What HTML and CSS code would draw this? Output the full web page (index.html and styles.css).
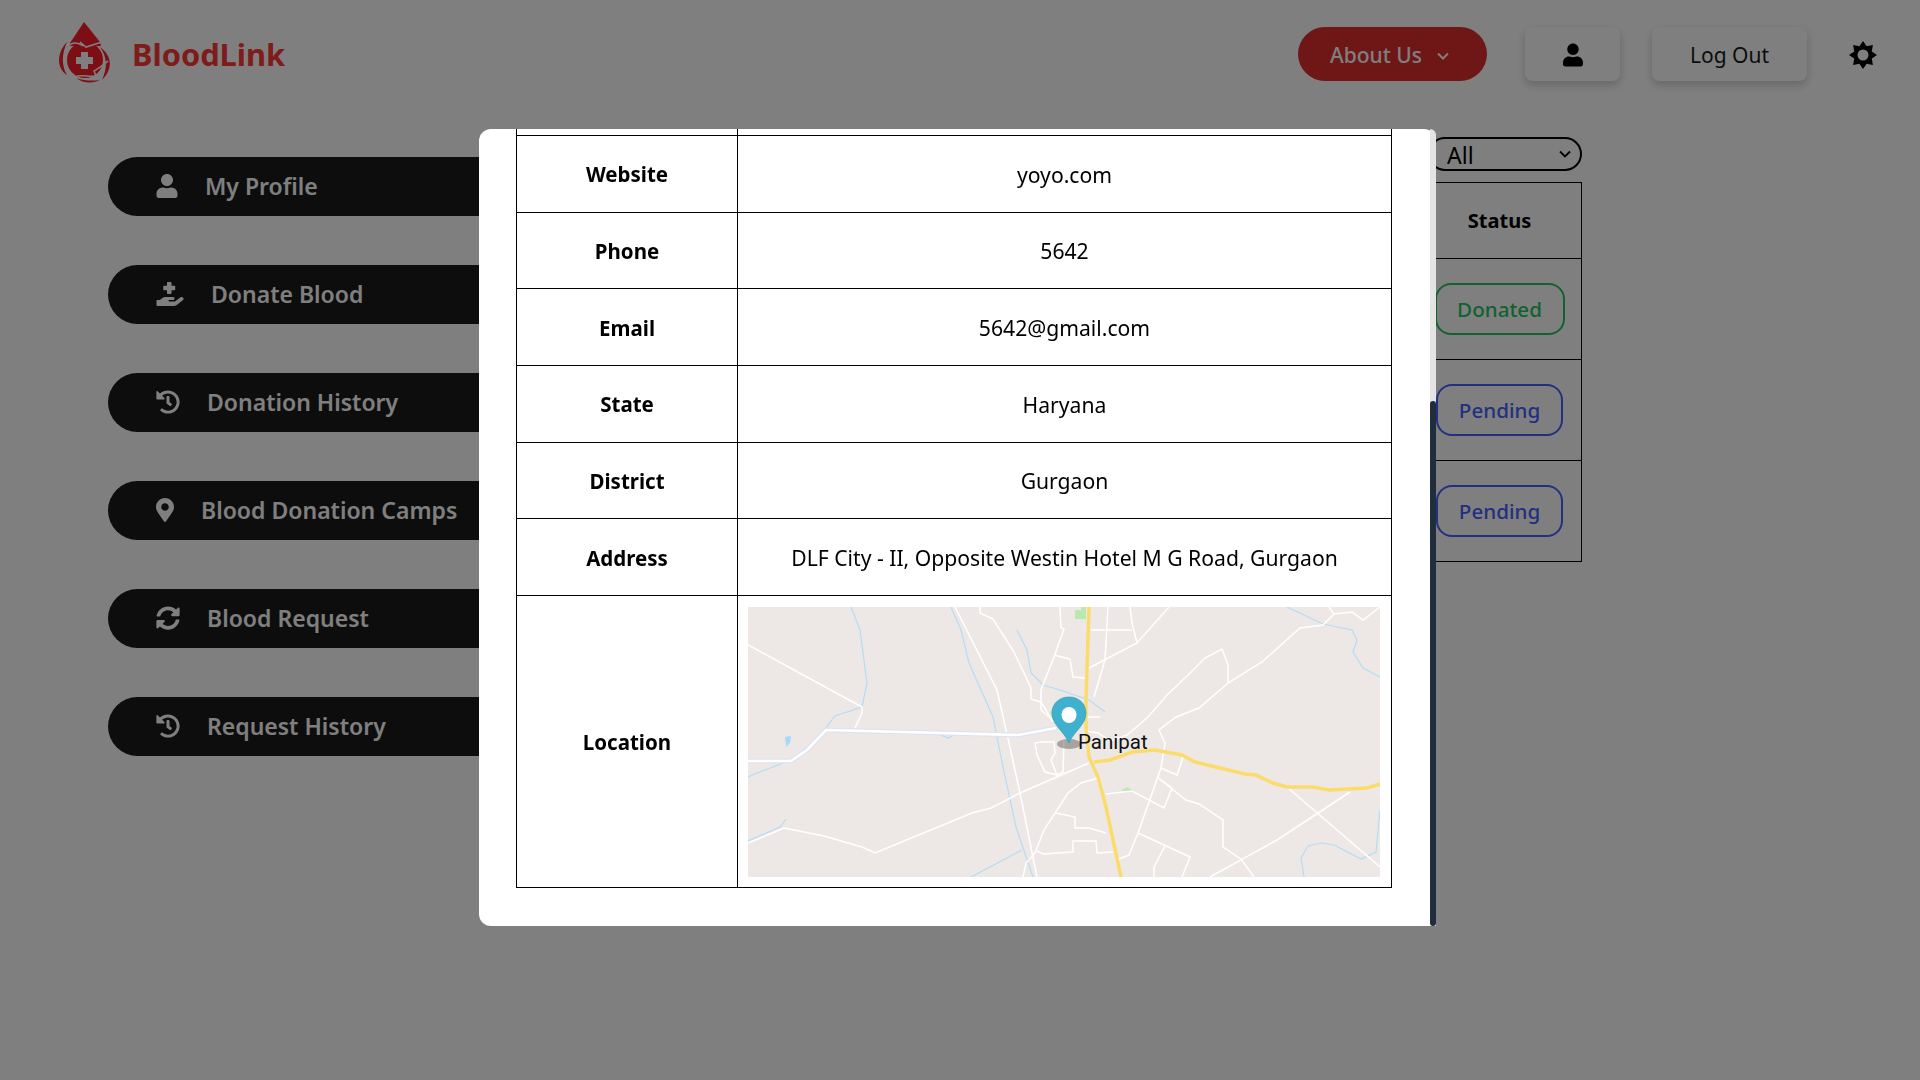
FILE: index.html
```html
<!DOCTYPE html>
<html lang="en">
  <head>
    <meta charset="UTF-8" />
    <meta name="viewport" content="width=device-width, initial-scale=1.0" />
    <title>BloodLink</title>
    <link rel="stylesheet" href="styles.css">
  </head>
  <body>
    <header class="navbar">
      <div class="brand">
        <svg class="brand-logo" viewBox="0 0 70 75">
          <path class="logo-red" d="M34 7 L50 27 L51 31 L20 31 L20 28 Z" />
          <circle class="logo-red" cx="35" cy="45" r="18" />
          <path class="logo-red" d="M17 27 C8 36 5 52 17 60 C11 50 12 38 17 27 Z" />
          <path class="logo-red" d="M50 32 C60 39 65 52 52 65 C58 52 57 42 50 32 Z" />
          <path class="logo-red" d="M26 63 C34 69 44 68 50 65 C43 66 34 66 26 63 Z" />
          <path class="logo-cut" d="M17 32 C22 27 28 27 33 31 M30 27 L36 32 L52 27" />
          <path class="logo-cut" d="M58 46 C50 52 48 54 44 56 L46 61 C40 62 34 60 27 61" />
          <path class="logo-cross" d="M31 37 h7 v5 h5 v7 h-5 v5 h-7 v-5 h-5 v-7 h5 z" />
        </svg>
        <span class="brand-name">BloodLink</span>
      </div>
      <nav class="nav-actions">
        <button class="about-btn">
          About Us
          <svg class="chevron" viewBox="0 0 12 8"><path d="M1 1.5 L6 6.5 L11 1.5" /></svg>
        </button>
        <button class="plain-btn user-btn">
          <svg class="user-icon" viewBox="0 0 448 512"><path d="M224 256c70.7 0 128-57.3 128-128S294.7 0 224 0 96 57.3 96 128s57.3 128 128 128zm89.6 32h-16.7c-22.2 10.2-46.9 16-72.9 16s-50.6-5.8-72.9-16h-16.7C60.2 288 0 348.2 0 422.4V464c0 26.5 21.5 48 48 48h352c26.5 0 48-21.5 48-48v-41.6c0-74.2-60.2-134.4-134.4-134.4z" /></svg>
        </button>
        <button class="plain-btn logout-btn">Log Out</button>
        <svg class="sun-icon" viewBox="0 0 28 28">
          <path d="M14 0 L17.6 5.2 L23.9 4.1 L22.8 10.4 L28 14 L22.8 17.6 L23.9 23.9 L17.6 22.8 L14 28 L10.4 22.8 L4.1 23.9 L5.2 17.6 L0 14 L5.2 10.4 L4.1 4.1 L10.4 5.2 Z" />
          <circle class="sun-hole" cx="14" cy="14" r="5.5" />
        </svg>
      </nav>
    </header>

    <div class="layout">
      <aside class="sidebar">
        <a class="side-link">
          <svg class="side-icon icon-user" viewBox="0 0 448 512"><path d="M224 256c70.7 0 128-57.3 128-128S294.7 0 224 0 96 57.3 96 128s57.3 128 128 128zm89.6 32h-16.7c-22.2 10.2-46.9 16-72.9 16s-50.6-5.8-72.9-16h-16.7C60.2 288 0 348.2 0 422.4V464c0 26.5 21.5 48 48 48h352c26.5 0 48-21.5 48-48v-41.6c0-74.2-60.2-134.4-134.4-134.4z" /></svg>
          My Profile
        </a>
        <a class="side-link">
          <svg class="side-icon icon-hand" viewBox="0 0 576 512"><path d="M159.88 175.82h64v64a16 16 0 0 0 16 16h64a16 16 0 0 0 16-16v-64h64a16 16 0 0 0 16-16v-64a16 16 0 0 0-16-16h-64v-64a16 16 0 0 0-16-16h-64a16 16 0 0 0-16 16v64h-64a16 16 0 0 0-16 16v64a16 16 0 0 0 16 16zM568.07 336.13a39.91 39.91 0 0 0-55.93-8.47L392.47 415.84H271.86a16 16 0 0 1 0-32H350.1c16 0 30.75-10.87 33.37-26.61a32.06 32.06 0 0 0-31.62-37.39h-160a117.7 117.7 0 0 0-74.12 26.25l-46.5 37.74H16a16 16 0 0 0-16 16v96a16 16 0 0 0 16 16H362.89a119.82 119.82 0 0 0 70.11-22.6L560.14 390.63a40 40 0 0 0 7.93-54.5z" /></svg>
          Donate Blood
        </a>
        <a class="side-link">
          <svg class="side-icon icon-round" viewBox="0 0 512 512"><path d="M504 255.531c.253 136.64-111.18 248.372-247.82 248.468-59.015.042-113.223-20.53-155.822-54.911-11.077-8.94-11.905-25.541-1.839-35.607l11.267-11.267c8.609-8.609 22.353-9.551 31.891-1.984C173.062 425.135 212.781 440 256 440c101.705 0 184-82.311 184-184 0-101.705-82.311-184-184-184-48.814 0-93.149 18.969-126.068 49.932l50.754 50.754c10.08 10.08 2.941 27.314-11.313 27.314H24c-8.837 0-16-7.163-16-16V38.627c0-14.254 17.234-21.393 27.314-11.314l49.372 49.372C129.209 34.136 189.552 8 256 8c136.81 0 247.747 110.78 248 247.531zm-180.912 78.784l9.823-12.63c8.138-10.463 6.253-25.542-4.21-33.679L288 256.349V152c0-13.255-10.745-24-24-24h-16c-13.255 0-24 10.745-24 24v135.651l65.409 50.874c10.463 8.137 25.541 6.253 33.679-4.21z" /></svg>
          Donation History
        </a>
        <a class="side-link">
          <svg class="side-icon icon-pin" viewBox="0 0 384 512"><path d="M172.268 501.67C26.97 291.031 0 260.868 0 192 0 85.961 85.961 0 192 0s192 85.961 192 192c0 68.868-26.97 99.031-172.268 309.67-9.535 13.774-29.93 13.773-39.464 0zM192 272c44.183 0 80-35.817 80-80s-35.817-80-80-80-80 35.817-80 80 35.817 80 80 80z" /></svg>
          Blood Donation Camps
        </a>
        <a class="side-link">
          <svg class="side-icon icon-round" viewBox="0 0 512 512"><path d="M370.72 133.28C339.458 104.008 298.888 87.962 255.848 88c-77.458.068-144.328 53.178-162.791 126.85-1.344 5.363-6.122 9.15-11.651 9.15H24.103c-7.498 0-13.194-6.807-11.807-14.176C33.933 94.924 134.813 8 256 8c66.448 0 126.791 26.136 171.315 68.685L463.03 40.97C478.149 25.851 504 36.559 504 57.941V192c0 13.255-10.745 24-24 24H345.941c-21.382 0-32.09-25.851-16.971-40.971l41.75-41.749zM32 296h134.059c21.382 0 32.09 25.851 16.971 40.971l-41.75 41.75c31.262 29.273 71.835 45.319 114.876 45.28 77.418-.07 144.315-53.144 162.787-126.849 1.344-5.363 6.122-9.15 11.651-9.15h57.304c7.498 0 13.194 6.807 11.807 14.176C478.067 417.076 377.187 504 256 504c-66.448 0-126.791-26.136-171.315-68.685L48.97 471.03C33.851 486.149 8 475.441 8 454.059V320c0-13.255 10.745-24 24-24z" /></svg>
          Blood Request
        </a>
        <a class="side-link">
          <svg class="side-icon icon-round" viewBox="0 0 512 512"><path d="M504 255.531c.253 136.64-111.18 248.372-247.82 248.468-59.015.042-113.223-20.53-155.822-54.911-11.077-8.94-11.905-25.541-1.839-35.607l11.267-11.267c8.609-8.609 22.353-9.551 31.891-1.984C173.062 425.135 212.781 440 256 440c101.705 0 184-82.311 184-184 0-101.705-82.311-184-184-184-48.814 0-93.149 18.969-126.068 49.932l50.754 50.754c10.08 10.08 2.941 27.314-11.313 27.314H24c-8.837 0-16-7.163-16-16V38.627c0-14.254 17.234-21.393 27.314-11.314l49.372 49.372C129.209 34.136 189.552 8 256 8c136.81 0 247.747 110.78 248 247.531zm-180.912 78.784l9.823-12.63c8.138-10.463 6.253-25.542-4.21-33.679L288 256.349V152c0-13.255-10.745-24-24-24h-16c-13.255 0-24 10.745-24 24v135.651l65.409 50.874c10.463 8.137 25.541 6.253 33.679-4.21z" /></svg>
          Request History
        </a>
      </aside>

      <main class="content">
        <div class="filter-row">
          <div class="filter-wrap">
            <select class="filter">
              <option>All</option>
            </select>
            <svg class="filter-arrow" viewBox="0 0 12 8"><path d="M1 1.5 L6 6.5 L11 1.5" /></svg>
          </div>
        </div>
        <table class="history-table">
          <tr>
            <th></th>
            <th class="status-col">Status</th>
          </tr>
          <tr>
            <td></td>
            <td class="status-cell"><span class="badge badge-green">Donated</span></td>
          </tr>
          <tr>
            <td></td>
            <td class="status-cell"><span class="badge badge-blue">Pending</span></td>
          </tr>
          <tr>
            <td></td>
            <td class="status-cell"><span class="badge badge-blue">Pending</span></td>
          </tr>
        </table>
      </main>
    </div>

    <!---------Details popup, opened scrolled to its end----------->
    <div class="overlay"></div>
    <div class="modal">
      <div class="modal-scroll">
        <div class="modal-body">
          <table class="detail-table">
            <tr><th></th><td></td></tr>
            <tr><th>Website</th><td>yoyo.com</td></tr>
            <tr><th>Phone</th><td>5642</td></tr>
            <tr><th>Email</th><td>5642@gmail.com</td></tr>
            <tr><th>State</th><td>Haryana</td></tr>
            <tr><th>District</th><td>Gurgaon</td></tr>
            <tr><th>Address</th><td>DLF City - II, Opposite Westin Hotel M G Road, Gurgaon</td></tr>
            <tr class="map-row">
              <th>Location</th>
              <td>
                <svg class="map" viewBox="0 0 632 270">
                  <rect class="map-land" width="632" height="270" />
                  <path class="map-green" d="M327 12 V3 H333 V0 H338 V12 Z" />
                  <path class="map-green" d="M373 184 L379 180 L386 184 Z" />
                  <path class="map-green" d="M302 105 L306 100 L306 118 Z" />
                  <path class="map-lake" d="M37 130 L43 129 L42 136 L38 140 Z" />

                  <g class="map-river">
                    <path d="M103 0 L112 23 L119 76 L114 100 L87 109 L68 133 L43 153 L9 166 L0 170" />
                    <path d="M203 0 L213 23 L221 56 L245 110 L255 160 L268 220 L285 270" />
                    <path d="M269 23 L279 43 L283 66 L295 78 L312 83 L341 93 L357 105" />
                    <path d="M0 234 L32 220 L38 212" />
                    <path d="M223 270 L274 243" />
                    <path d="M556 270 L553 251 L560 239 L573 236 L586 238 L613 252 L628 245 L632 203" />
                    <path d="M539 0 L575 17 L604 23 L609 33 L605 45 L615 61 L632 70" />
                    <path d="M190 127 L200 131 L208 127" />
                  </g>

                  <g class="map-road">
                    <path d="M0 38 L114 100 L114 106 L106 123" />
                    <path d="M207 0 L249 83 L261 136 L272 186 L289 270" />
                    <path d="M421 0 L389 36 L341 61" />
                    <path d="M632 0 L615 13 L604 5 L586 7 L581 0 M586 7 L575 18 L552 21 L514 55 L480 76 L451 101 L428 110 L411 123 L417 136 L413 161 L390 226 L381 248 L371 252" />
                    <path d="M480 76 L480 58 L474 42 L457 51 L440 68 L419 88 L400 110 L379 128" />
                    <path d="M360 0 L357 53 L346 90" />
                    <path d="M382 0 L384 16 L389 36" />
                    <path d="M343 23 L384 23" />
                    <path d="M312 0 L313 21 L316 22 L306 50 L293 83 L293 103 L308 116" />
                    <path d="M306 48 L322 52 L325 70 L337 71" />
                    <path d="M232 0 L232 6 L245 12 L266 45 L283 81 L283 92 L293 95 L305 115" />
                    <path d="M287 136 L289 148 L297 165 L309 168 L303 153 L307 146 L306 135 L293 135 Z" />
                    <path d="M316 133 L315 165 L309 168" />
                    <path d="M338 110 L352 110 M338 124 L350 126 L362 134 L379 128" />
                    <path d="M0 236 L36 221 L76 229 L114 240 L127 246 L224 206 L243 201 L272 186 L341 156" />
                    <path d="M350 171 L333 176 L320 186 L296 223 L287 246 L278 256 L275 270" />
                    <path d="M308 206 L327 210 L327 221 L341 221 L358 226" />
                    <path d="M289 244 L295 247 L325 245 L325 234 L348 234 L349 246 L365 245" />
                    <path d="M358 187 L384 184 L416 201 L424 181 L409 170 L438 193 L451 197 L475 213 L475 240 L493 252 L506 270" />
                    <path d="M413 161 L429 168 L435 150" />
                    <path d="M390 226 L442 250 L434 270" />
                    <path d="M417 239 L406 260 L406 270" />
                    <path d="M462 270 L529 233 L602 185" />
                    <path d="M539 180 L632 260" />
                  </g>

                  <path class="map-trunk-edge" d="M0 154 L43 154 L59 143 L78 123 L194 126 L270 128 L308 121" />
                  <path class="map-trunk" d="M0 154 L43 154 L59 143 L78 123 L194 126 L270 128 L308 121" />

                  <g class="map-highway">
                    <path d="M341 0 L338 93 L338 120 L341 150 L350 170 L358 200 L365 233 L373 270" />
                    <path d="M346 155 L362 153 L384 145 L407 143 L434 148 L447 155 L497 167 L508 168 L525 176 L539 180 L565 180 L581 183 L619 181 L632 177" />
                  </g>

                  <ellipse class="map-shadow" cx="321" cy="137" rx="12" ry="5" />
                  <path class="map-pin" d="M321 136 C316 124 304 118 304 106 C304 96 312 90 321 90 C330 90 338 96 338 106 C338 118 326 124 321 136 Z" />
                  <ellipse class="map-pin-hole" cx="321" cy="108" rx="7.5" ry="8" />
                  <text class="map-label" x="330" y="142">Panipat</text>
                </svg>
              </td>
            </tr>
          </table>
        </div>
      </div>
      <div class="scroll-track">
        <div class="scroll-thumb"></div>
      </div>
    </div>
  </body>
</html>
```

FILE: styles.css
```css
* {
  box-sizing: border-box;
  font-family: "Noto Sans", "Open Sans", sans-serif;
}
html,
body {
  height: 100%;
}
body {
  margin: 0;
  background-color: white;
  overflow: hidden;
}

/* top bar */
.navbar {
  display: flex;
  justify-content: space-between;
  align-items: center;
  height: 108px;
  padding: 0 43px 0 50px;
}
.brand {
  display: flex;
  align-items: center;
  gap: 12px;
}
.brand-logo {
  width: 70px;
  height: 75px;
  margin-top: -3px;
}
.logo-red {
  fill: #fa1e28;
}
.logo-cut {
  fill: none;
  stroke: white;
  stroke-width: 1.6;
}
.logo-cross {
  fill: #ffffff;
}
.brand-name {
  font-size: 30.8px;
  font-weight: 700;
  color: #ff3636;
}
.nav-actions {
  display: flex;
  align-items: center;
}
.about-btn {
  display: flex;
  align-items: center;
  gap: 15px;
  width: 189px;
  height: 54px;
  padding: 2px 0 0 32px;
  border: none;
  border-radius: 27px;
  background-color: #de2c2c;
  color: white;
  font-size: 21px;
  font-weight: 500;
}
.chevron {
  width: 12px;
  height: 8px;
  margin-top: 2px;
  fill: none;
  stroke: white;
  stroke-width: 2;
}
.plain-btn {
  height: 54px;
  padding: 2px 0 0;
  border: none;
  border-radius: 8px;
  background-color: white;
  box-shadow: 0 4px 10px rgba(0, 0, 0, 0.2);
  color: #1a1a1a;
  font-size: 21px;
}
.user-btn {
  display: flex;
  justify-content: center;
  align-items: center;
  width: 95px;
  margin-left: 38px;
}
.user-icon {
  width: 20px;
  height: 24px;
  fill: black;
}
.logout-btn {
  width: 155px;
  margin-left: 32px;
}
.sun-icon {
  width: 28px;
  height: 28px;
  margin-top: 2px;
  margin-left: 42px;
  fill: black;
}
.sun-hole {
  fill: white;
}

/* page under the popup */
.layout {
  display: flex;
  padding: 0 338px 0 108px;
}
.sidebar {
  display: flex;
  flex-direction: column;
  gap: 49px;
  width: 480px;
  padding-top: 49px;
}
.side-link {
  display: flex;
  align-items: center;
  height: 59px;
  padding: 0 0 2px 48px;
  border-radius: 30px;
  background-color: #1a1a1a;
  color: white;
  font-size: 23px;
  font-weight: 600;
}
.side-icon {
  height: 24px;
  margin-right: 27px;
  fill: white;
}
.icon-user {
  width: 22px;
}
.icon-hand {
  width: 28px;
}
.icon-round {
  width: 24px;
}
.icon-pin {
  width: 18px;
}
.content {
  flex: 1;
  padding-top: 29px;
}
.filter-row {
  display: flex;
  justify-content: flex-end;
  margin-bottom: 11px;
}
.filter-wrap {
  position: relative;
  width: 154px;
  height: 34px;
}
.filter {
  width: 100%;
  height: 100%;
  padding: 0 0 3px 17px;
  border: 2px solid black;
  border-radius: 17px;
  background-color: white;
  font-size: 23px;
  appearance: none;
}
.filter-arrow {
  position: absolute;
  right: 11px;
  top: 13px;
  width: 12px;
  height: 8px;
  fill: none;
  stroke: black;
  stroke-width: 1.8;
}
.history-table {
  width: 100%;
  border-collapse: collapse;
}
.history-table th,
.history-table td {
  border: 1px solid black;
}
.history-table th {
  height: 76px;
  font-size: 20px;
  font-weight: 700;
  color: black;
}
.status-col {
  width: 164px;
}
.status-cell {
  padding: 24px 0;
  text-align: center;
}
.badge {
  display: inline-flex;
  justify-content: center;
  align-items: center;
  width: 127px;
  height: 52px;
  border: 2px solid;
  border-radius: 16px;
  font-size: 20.6px;
  font-weight: 500;
  vertical-align: middle;
}
.badge-green {
  width: 130px;
  color: #22c55e;
}
.badge-blue {
  color: #4460ff;
}

/* popup */
.overlay {
  position: fixed;
  inset: 0;
  background-color: rgba(0, 0, 0, 0.5);
}
.modal {
  position: fixed;
  left: 479px;
  top: 129px;
  width: 957px;
  height: 797px;
  border-radius: 12px 12px 3px 12px;
  background-color: white;
}
.modal-scroll {
  display: flex;
  flex-direction: column-reverse;
  height: 100%;
  overflow: hidden;
}
.modal-body {
  flex-shrink: 0;
  padding: 0 44px 38px 37px;
}
.detail-table {
  width: 100%;
  border-collapse: collapse;
  table-layout: fixed;
  color: black;
  font-size: 21.15px;
  text-align: center;
}
.detail-table th,
.detail-table td {
  height: 76.7px;
  padding-top: 2px;
  border: 1px solid black;
}
.detail-table th {
  width: 221px;
  font-size: 20.5px;
  font-weight: 700;
}
.map-row td {
  padding: 11px 10px 10px;
}
.map {
  display: block;
  width: 632px;
  height: 270px;
}
.scroll-track {
  position: absolute;
  right: 0;
  top: 0;
  bottom: 0;
  width: 6px;
  padding-top: 272px;
  border-top-right-radius: 12px;
  background-color: #e4e4e4;
}
.scroll-thumb {
  height: 100%;
  border-radius: 3px;
  background-color: #1f2d3d;
}

/* map drawing */
.map-land {
  fill: #ede8e5;
}
.map-green {
  fill: #b9e9ae;
}
.map-lake {
  fill: #a5d9f7;
}
.map-river path {
  fill: none;
  stroke: #b5dcf5;
  stroke-width: 1.2;
}
.map-road path {
  fill: none;
  stroke: white;
  stroke-width: 1.5;
}
.map-trunk-edge {
  fill: none;
  stroke: #dfe3ee;
  stroke-width: 5;
}
.map-trunk {
  fill: none;
  stroke: white;
  stroke-width: 2.6;
}
.map-highway path {
  fill: none;
  stroke: #fbdc6a;
  stroke-width: 3.5;
}
.map-shadow {
  fill: rgba(60, 60, 60, 0.4);
}
.map-pin {
  fill: #3fb1ce;
  stroke: #3a9ab5;
  stroke-width: 0.7;
}
.map-pin-hole {
  fill: white;
}
.map-label {
  font-family: Roboto, sans-serif;
  font-size: 20.5px;
  fill: #111111;
}
```
